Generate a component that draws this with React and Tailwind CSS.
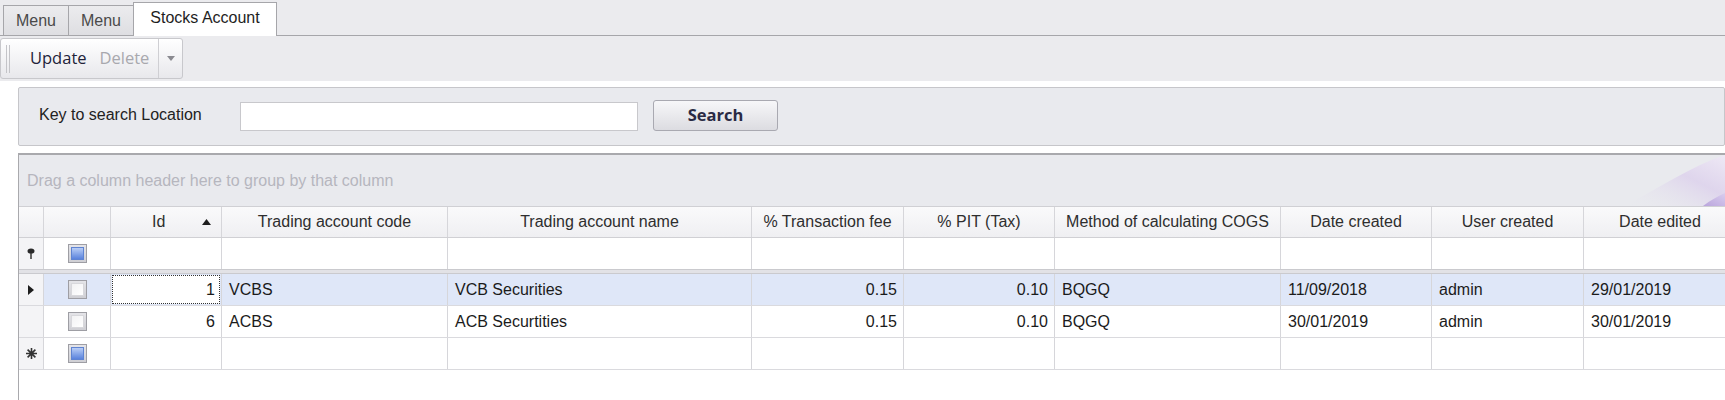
import React from 'react';

const cols =
  'grid grid-cols-[25px_67px_111px_226px_304px_152px_151px_226px_151px_152px_153px_200px]';

const headers = [
  'Trading account code',
  'Trading account name',
  '% Transaction fee',
  '% PIT (Tax)',
  'Method of calculating COGS',
  'Date created',
  'User created',
  'Date edited',
  '',
];

const rows = [
  { id: 1, code: 'VCBS', name: 'VCB Securities', fee: '0.15', pit: '0.10', cogs: 'BQGQ', created: '11/09/2018', user: 'admin', edited: '29/01/2019', current: true },
  { id: 6, code: 'ACBS', name: 'ACB Securtities', fee: '0.15', pit: '0.10', cogs: 'BQGQ', created: '30/01/2019', user: 'admin', edited: '30/01/2019' },
];

const Check = ({ blue }) => (
  <div className="w-[19px] h-[19px] border border-[#9e9ea4] bg-gradient-to-b from-[#e4e4e8] to-[#cfcfd4] p-[2px]">
    {blue ? (
      <div className="w-full h-full border border-[#5f84d2] bg-gradient-to-b from-[#b9cdf5] to-[#5a82dc]"></div>
    ) : (
      <div className="w-full h-full border border-[#d8d8dc] bg-gradient-to-br from-[#f2f2f4] to-white"></div>
    )}
  </div>
);

const Cell = ({ className = '', children }) => (
  <div className={`h-full border-r border-[#d6d6da] flex items-center overflow-hidden whitespace-nowrap ${className}`}>
    {children}
  </div>
);

const Tab = ({ active, children }) =>
  active ? (
    <div className="h-[34px] -mb-px w-[144px] bg-white border border-b-0 border-[#a6a6aa] flex items-center justify-center pb-[3px] text-[#1e1e1e]">
      {children}
    </div>
  ) : (
    <div className="h-[30px] w-[66px] -mr-px bg-gradient-to-b from-[#ececee] to-[#dedee2] border border-b-0 border-[#a6a6aa] flex items-center justify-center text-[#4a4a4a]">
      {children}
    </div>
  );

const App = () => {
  return (
    <div className="w-[1725px] h-[400px] overflow-hidden bg-white font-['Liberation_Sans',Arial,sans-serif] text-[16px] text-[#1b1b1b]">
      {/* tabs */}
      <div className="h-[36px] bg-[#ebebee] border-b border-[#a6a6aa] flex items-end pl-[3px]">
        <Tab>Menu</Tab>
        <Tab>Menu</Tab>
        <Tab active>Stocks Account</Tab>
      </div>

      {/* toolbar dock */}
      <div className="h-[45px] bg-[#ebebee] pt-[2px]">
        <div className="h-[41px] w-[183px] rounded-[3px] border border-[#c8c8cc] bg-gradient-to-b from-white to-[#e8e8ec] flex items-center pl-[5px] font-['Open_Sans',sans-serif] text-[16.5px]">
          <div className="h-[28px] w-[5px] flex gap-[2px]">
            <div className="w-px h-full bg-[#c4c4c8]"></div>
            <div className="w-px h-full bg-[#c4c4c8]"></div>
          </div>
          <span className="ml-[19px] font-medium text-[#22223a]">Update</span>
          <span className="ml-[13px] text-[#a8a8ae]">Delete</span>
          <div className="ml-[9px] self-stretch w-px bg-[#cfcfd3]"></div>
          <div className="flex-1 flex items-center justify-center">
            <svg width="8" height="5" viewBox="0 0 8 5">
              <path d="M0 0h8L4 5z" fill="#8a8a90" />
            </svg>
          </div>
        </div>
      </div>

      {/* content */}
      <div className="pl-[18px] pt-[6px]">
        <div className="h-[59px] border border-[#c6c6ca] rounded-[2px] bg-[#e9eaee] flex items-center pl-[20px]">
          <span className="w-[201px] -mt-[3px] text-[#222]">Key to search Location</span>
          <div className="w-[398px] h-[29px] bg-white border border-[#c8c8cc]"></div>
          <button className="ml-[15px] w-[125px] h-[31px] -mt-[2px] rounded-[3px] border border-[#a9a9b1] bg-gradient-to-b from-[#f7f7f9] to-[#dcdce1] font-['Open_Sans',sans-serif] font-bold text-[16.5px] text-[#2a2a44]">
            Search
          </button>
        </div>

        <div className="mt-[7px] h-[260px] border-l border-t-2 border-[#a9a9ad] overflow-hidden">
          {/* group panel */}
          <div className="relative h-[52px] bg-[#e9eaee] border-b border-[#d0d0d4] flex items-center pl-[8px] text-[#b6b6be]">
            Drag a column header here to group by that column
            <svg className="absolute right-0 top-0" width="140" height="51" viewBox="0 0 140 51">
              <defs>
                <linearGradient id="glow" x1="0" y1="1" x2="1" y2="0">
                  <stop offset="0" stopColor="#e9eaee" stopOpacity="0" />
                  <stop offset="0.6" stopColor="#dcd0ec" stopOpacity="0.8" />
                  <stop offset="1" stopColor="#efe9f6" stopOpacity="0.9" />
                </linearGradient>
                <linearGradient id="band" x1="0" y1="1" x2="1" y2="0">
                  <stop offset="0" stopColor="#b9a4dc" />
                  <stop offset="1" stopColor="#d9cdee" />
                </linearGradient>
              </defs>
              <path d="M40 51 C75 32 105 12 140 0 L140 51 Z" fill="url(#glow)" />
              <path d="M118 51 C126 45 133 41 140 38 L140 51 Z" fill="url(#band)" />
            </svg>
          </div>

          {/* header */}
          <div className={`${cols} h-[31px] border-b border-[#d0d0d4] bg-gradient-to-b from-[#fafafb] to-[#efeff2] text-[#2e2e2e]`}>
            <Cell />
            <Cell />
            <Cell className="justify-between pl-[41px] pr-[10px]">
              <span>Id</span>
              <svg width="9" height="6" viewBox="0 0 9 6">
                <path d="M0 6h9L4.5 0z" fill="#1e1e1e" />
              </svg>
            </Cell>
            {headers.map((h, i) => (
              <Cell key={i} className="justify-center">{h}</Cell>
            ))}
          </div>

          {/* filter row */}
          <div className={`${cols} h-[31px] bg-white`}>
            <Cell className="justify-center bg-[#f4f4f6]">
              <svg width="8" height="12" viewBox="0 0 8 12">
                <ellipse cx="4" cy="3" rx="3.5" ry="2.6" fill="#2a2a2a" />
                <rect x="3.3" y="5" width="1.4" height="6" fill="#2a2a2a" />
              </svg>
            </Cell>
            <Cell className="justify-center"><Check blue /></Cell>
            {Array.from({ length: 10 }).map((_, i) => <Cell key={i} />)}
          </div>
          <div className="h-[5px] bg-[#e2e2e6] border-y border-[#cacace]"></div>

          {/* data rows */}
          {rows.map((r) => (
            <div
              key={r.id}
              className={`${cols} h-[32px] border-b border-[#dadade] ${r.current ? 'bg-[#dfe7f8]' : 'bg-white'}`}
            >
              <Cell className="justify-center bg-[#f4f4f6]">
                {r.current && (
                  <svg width="6" height="10" viewBox="0 0 6 10">
                    <path d="M0 0L6 5L0 10z" fill="#1e1e1e" />
                  </svg>
                )}
              </Cell>
              <Cell className="justify-center"><Check /></Cell>
              {r.current ? (
                <Cell className="p-[1px]">
                  <div className="w-full h-full bg-white border border-dotted border-[#333] flex items-center justify-end pr-[4px]">
                    {r.id}
                  </div>
                </Cell>
              ) : (
                <Cell className="justify-end pr-[6px]">{r.id}</Cell>
              )}
              <Cell className="pl-[7px]">{r.code}</Cell>
              <Cell className="pl-[7px]">{r.name}</Cell>
              <Cell className="justify-end pr-[6px]">{r.fee}</Cell>
              <Cell className="justify-end pr-[6px]">{r.pit}</Cell>
              <Cell className="pl-[7px]">{r.cogs}</Cell>
              <Cell className="pl-[7px]">{r.created}</Cell>
              <Cell className="pl-[7px]">{r.user}</Cell>
              <Cell className="pl-[7px]">{r.edited}</Cell>
              <Cell />
            </div>
          ))}

          {/* new item row */}
          <div className={`${cols} h-[32px] border-b border-[#dadade] bg-white`}>
            <Cell className="justify-center bg-[#f4f4f6]">
              <svg width="11" height="11" viewBox="0 0 11 11" stroke="#333" strokeWidth="1.6">
                <path d="M5.5 0v11M0 5.5h11M1.6 1.6l7.8 7.8M9.4 1.6l-7.8 7.8" />
              </svg>
            </Cell>
            <Cell className="justify-center"><Check blue /></Cell>
            {Array.from({ length: 10 }).map((_, i) => <Cell key={i} />)}
          </div>
        </div>
      </div>
    </div>
  );
};

export default App;
